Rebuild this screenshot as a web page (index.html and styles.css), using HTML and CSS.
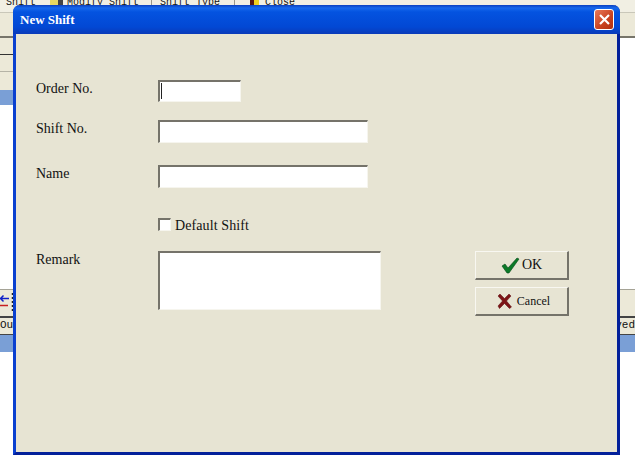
FILE: index.html
```html
<!DOCTYPE html>
<html lang="en">
<head>
    <meta charset="UTF-8">
    <title>New Shift</title>
    <link rel="stylesheet" href="styles.css">
</head>
<body>
    <div class="app">
        <div class="toolbar">
            <span class="tool tool-first">Shift</span>
            <span class="tool tool-modify">
                <span class="tool-icon icon-modify"></span>Modify Shift
            </span>
            <span class="tool tool-type">Shift Type</span>
            <span class="tool tool-close">
                <span class="tool-icon icon-close"></span>Close
            </span>
        </div>
        <div class="panes">
            <div class="pane-left">
                <div class="pane-head"></div>
                <div class="pane-line"></div>
                <div class="pane-line pane-line-last"></div>
                <div class="pane-line pane-line-end"></div>
                <div class="band band-top"></div>
            </div>
            <div class="pane-right">
                <div class="pane-head"></div>
            </div>
        </div>
        <div class="bottom-tools">
            <svg width="14" height="26" viewBox="0 0 14 26">
                <path d="M0 8.500h9M3.500 5.500L0.500 8.500l3 3" fill="none" stroke="#1020c8" stroke-width="1.500"/>
                <path d="M0 15.500h8" stroke="#c82020" stroke-width="1.500"/>
                <path d="M12.500 3v20" stroke="#222" stroke-width="1.500" stroke-dasharray="2 2"/>
            </svg>
        </div>
        <div class="columns">
            <span>Out</span>
            <span>ved</span>
        </div>
        <div class="band band-bottom"></div>
    </div>

    <div class="window">
        <div class="titlebar">
            <span class="title">New Shift</span>
            <button class="close-btn">
                <svg width="13" height="13" viewBox="0 0 13 13">
                    <path d="M2 2l9 9M11 2l-9 9" stroke="#fff" stroke-width="2.200"/>
                </svg>
            </button>
        </div>
        <div class="client">
            <div class="fields">
                <div class="row row-order">
                    <label class="label">Order No.</label>
                    <input class="input input-order" type="text">
                </div>
                <div class="row row-shift">
                    <label class="label">Shift No.</label>
                    <input class="input input-wide" type="text">
                </div>
                <div class="row row-name">
                    <label class="label">Name</label>
                    <input class="input input-wide" type="text">
                </div>
                <div class="row row-default">
                    <span class="label"></span>
                    <span class="checkbox"></span>
                    <span class="check-label">Default Shift</span>
                </div>
                <div class="row">
                    <label class="label">Remark</label>
                    <textarea class="input input-remark"></textarea>
                </div>
            </div>
            <div class="actions">
                <button class="button">
                    <svg width="19" height="17" viewBox="0 0 19 17">
                        <path d="M1 9l3-2 3 4 9-10 2 1-10 14H6z" fill="#0c7a28" stroke="#07481a" stroke-width="0.600"/>
                    </svg>
                    <span>OK</span>
                </button>
                <button class="button button-wide-text">
                    <svg width="15" height="16" viewBox="0 0 15 16">
                        <path d="M1 3l2-2 4.500 4.500L12 1l2 2-4.500 5 5 6-2 1.500-5-5-5 5L1 13l4.500-5z" fill="#7c1416" stroke="#5c0c0e" stroke-width="0.500"/>
                    </svg>
                    <span class="button-cancel">Cancel</span>
                </button>
            </div>
        </div>
    </div>
</body>
</html>
```

FILE: styles.css
```css
html, body {
    margin: 0;
    height: 100%;
    overflow: hidden;
    background-color: #fff;
}

/* application behind the dialog */
.app {
    display: flex;
    flex-direction: column;
    font-family: "Liberation Mono", monospace;
    font-size: 10px;
    color: #111;
}

.toolbar {
    height: 13px;
    box-sizing: border-box;
    background-color: #f1efe3;
    border-bottom: 1px solid #c9c7b9;
    overflow: hidden;
    display: flex;
    line-height: 5px;
}

.tool {
    display: flex;
    height: 5px;
    white-space: pre;
}

.tool-first {
    width: 50px;
    padding-left: 6px;
    box-sizing: border-box;
}

.tool-modify {
    width: 102px;
    border-right: 1px solid #99978a;
    box-sizing: border-box;
}

.tool-type {
    width: 83px;
    padding-left: 8px;
    border-right: 1px solid #99978a;
    box-sizing: border-box;
}

.tool-close {
    padding-left: 15px;
}

.tool-icon {
    height: 5px;
    flex: none;
}

.icon-modify {
    width: 13px;
    margin-right: 4px;
    background: linear-gradient(90deg, #e8d860 8px, #444 8px);
}

.icon-close {
    width: 9px;
    margin-right: 6px;
    background: linear-gradient(90deg, #5a1810 4px, #f0d020 4px);
}

.panes {
    display: flex;
    height: 277px;
    box-sizing: border-box;
    border-bottom: 1px solid #a5a396;
}

.pane-left {
    width: 120px;
    flex: none;
}

.pane-right {
    flex: 1;
}

.pane-head {
    height: 23px;
    background-color: #ece9d8;
    border-bottom: 2px solid #77756a;
}

.pane-line {
    height: 16px;
    background-color: #ece9d8;
    border-bottom: 1px solid #333;
}

.pane-line-last {
    border-bottom-color: #b5b3a6;
}

.pane-line-end {
    height: 18px;
    border-bottom: 0;
}

.band {
    background-color: #7a9fd6;
}

.band-top {
    height: 15px;
}

.bottom-tools {
    height: 28px;
    background-color: #ece9d8;
    border-bottom: 2px solid #444;
    box-sizing: border-box;
    display: flex;
    align-items: center;
}

.columns {
    display: flex;
    justify-content: space-between;
    height: 17px;
    box-sizing: border-box;
    line-height: 15px;
    font-size: 11px;
    background-color: #ece9d8;
    border-bottom: 1px solid #444;
}

.band-bottom {
    height: 17px;
}

/* dialog */
.window {
    position: absolute;
    left: 13px;
    top: 5px;
    width: 607px;
    height: 450px;
    box-sizing: border-box;
    display: flex;
    flex-direction: column;
    border-style: solid;
    border-width: 0 3px 3px;
    border-color: #0a40d0 #03209a #03209a #0a40d0;
    border-radius: 7px 7px 0 0;
    background-color: #e7e4d3;
    font-family: "Liberation Serif", serif;
    font-size: 14px;
    color: #111;
}

.titlebar {
    height: 29px;
    margin: 0 -3px;
    padding: 0 6px 0 7px;
    flex: none;
    display: flex;
    align-items: center;
    justify-content: space-between;
    border-radius: 7px 7px 0 0;
    background: linear-gradient(#0a3fc0 0, #1668ec 3px, #0453e0 7px, #0248d4 22px, #0a3ab8 29px);
}

.title {
    color: #fff;
    font-size: 13px;
    font-weight: bold;
}

.close-btn {
    width: 20px;
    height: 21px;
    padding: 0;
    display: flex;
    align-items: center;
    justify-content: center;
    border: 1px solid #fff;
    border-radius: 3px;
    background: linear-gradient(135deg, #e8795a, #c8411f 60%, #b03010);
}

.client {
    display: flex;
    padding: 46px 0 0 20px;
}

.fields {
    width: 345px;
    display: flex;
    flex-direction: column;
}

.row {
    display: flex;
    align-items: flex-start;
}

.row-order {
    margin-bottom: 18px;
}

.row-shift {
    margin-bottom: 22px;
}

.row-name {
    margin-bottom: 30px;
}

.row-default {
    margin-bottom: 19px;
    align-items: center;
    height: 14px;
}

.label {
    width: 122px;
    flex: none;
    line-height: 18px;
}

.check-label {
    margin: 2px 0 0 -1px;
    letter-spacing: 0.1px;
}

.input {
    box-sizing: border-box;
    height: 23px;
    padding: 0;
    margin: 0;
    border-style: solid;
    border-width: 2px 1px 1px 2px;
    border-color: #75736a #f6f5ee #f6f5ee #75736a;
    border-radius: 0;
    outline: none;
    resize: none;
    background-color: #fff;
}

.input-order {
    width: 83px;
    height: 22px;
    background: linear-gradient(#222, #222) 1px 1px / 1px 16px no-repeat, #fff;
}

.input-wide {
    width: 210px;
}

.input-remark {
    width: 223px;
    height: 59px;
}

.checkbox {
    box-sizing: border-box;
    width: 13px;
    height: 13px;
    margin: -2px 5px 0 0;
    border-style: solid;
    border-width: 2px 1px 1px 2px;
    border-color: #75736a #f6f5ee #f6f5ee #75736a;
    background-color: #fff;
}

.actions {
    width: 94px;
    margin: 171px 0 0 94px;
    display: flex;
    flex-direction: column;
    gap: 7px;
}

.button {
    box-sizing: border-box;
    height: 29px;
    padding: 0;
    display: flex;
    align-items: center;
    justify-content: center;
    gap: 2px;
    border-style: solid;
    border-width: 1px 2px 2px 1px;
    border-color: #f8f7f1 #75736a #75736a #f8f7f1;
    background-color: #e7e4d3;
    font-family: inherit;
    font-size: 14px;
    color: #111;
}

.button-wide-text {
    padding-left: 4px;
}

.button-cancel {
    font-size: 12px;
    margin-left: 3px;
}
```
